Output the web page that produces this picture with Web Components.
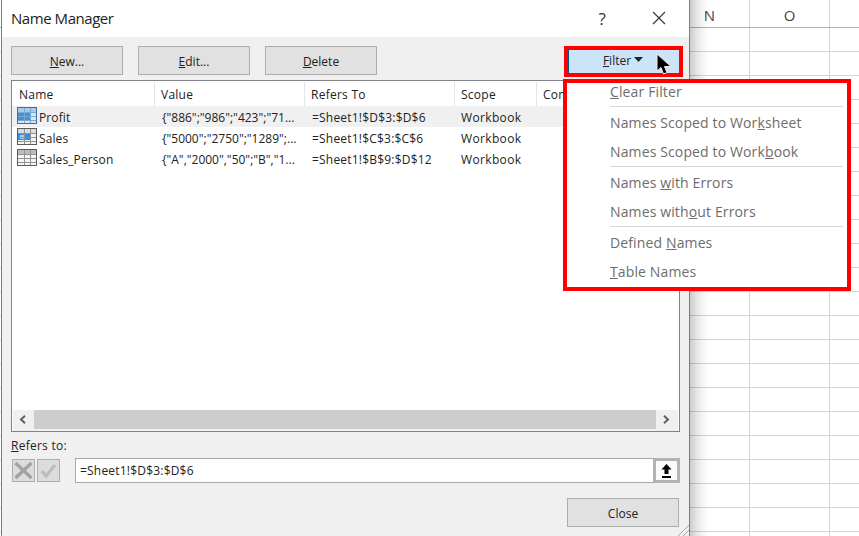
<!DOCTYPE html>
<html>
<head>
<meta charset="utf-8">
<style>
html,body{margin:0;padding:0;overflow:hidden}
body{font:12px "Open Sans","Noto Sans",sans-serif;color:#222;background:#fff}
</style>
</head>
<body>
<excel-screen></excel-screen>

<template id="t-btn">
  <style>
  :host{display:block;box-sizing:border-box;width:112px;height:29px;border:1px solid #adadad;background:#e1e1e1;color:#222;
    font:12px "Open Sans","Noto Sans",sans-serif;display:flex;align-items:center;justify-content:center;padding-top:2px}
  :host([hot]){background:#cce4f7;border:1px solid #005499;padding:0 2px 0 0}
  u{text-underline-offset:1px}
  </style>
  <slot></slot>
</template>

<script>
class NmButton extends HTMLElement {
  constructor(){super();
    this.attachShadow({mode:'open'})
    this.shadowRoot.appendChild(document.getElementById('t-btn').content.cloneNode(true))
  }
}
customElements.define('nm-button', NmButton)

class NameIcon extends HTMLElement {
  static get observedAttributes(){ return ['kind'] }
  attributeChangedCallback(){ this.render() }
  connectedCallback(){ this.render() }
  constructor(){super(); this.attachShadow({mode:'open'}) }
  render(){
    let kind = this.getAttribute('kind')
    let fill = ''
    let frame = '#5c5c5c'
    let line = '#929292'
    if(kind=='profit'){
      fill = '<rect x="1" y="1" width="18" height="4" fill="#a9c9e8"/><rect x="1" y="5" width="18" height="11" fill="#d5e6f5"/><rect x="1" y="6" width="13" height="7" fill="#3f92de"/>'
      frame = '#3e6e9f'
      line = '#7fa8cf'
    }
    if(kind=='sales'){
      fill = '<rect x="1" y="1" width="18" height="4" fill="#dcdcdc"/><rect x="1" y="5" width="18" height="11" fill="#f4f4f4"/><rect x="1" y="6" width="13" height="6" fill="#2f8de0"/><rect x="3" y="7" width="4" height="4" fill="#a9d0f2"/>'
    }
    if(kind=='plain'){
      fill = '<rect x="1" y="1" width="18" height="4" fill="#bdbdbd"/><rect x="1" y="5" width="18" height="11" fill="#f6f6f6"/>'
    }
    this.shadowRoot.innerHTML = `
    <style>:host{display:block;width:20px;height:17px;flex:none;margin-top:1px} svg{display:block}</style>
    <svg width="20" height="17" viewBox="0 0 20 17" shape-rendering="crispEdges">
      ${fill}
      <path d="M7.5 1v15M13.5 1v15M1 5.5h18M1 9.5h18M1 13h18" stroke="${line}" stroke-width="1" fill="none"/>
      <rect x=".5" y=".5" width="19" height="16" fill="none" stroke="${frame}"/>
    </svg>`
  }
}
customElements.define('name-icon', NameIcon)

class NameRow extends HTMLElement {
  static get observedAttributes(){ return ['name','value','refers','kind'] }
  attributeChangedCallback(){ this.render() }
  connectedCallback(){ this.render() }
  constructor(){super(); this.attachShadow({mode:'open'}) }
  render(){
    this.shadowRoot.innerHTML = `
    <style>
    :host{display:grid;grid-template-columns:144px 150px 149px 82px 1fr;height:21px;
      font:12px/23px "Open Sans","Noto Sans",sans-serif;color:#222}
    :host([selected]){background:#f0f0f0}
    div{white-space:nowrap;overflow:hidden}
    .n{display:flex;gap:2px;padding-left:5px;letter-spacing:.1px}
    .v{padding-left:6px}
    .r{padding-left:6px;letter-spacing:.2px}
    .s{padding-left:6px;letter-spacing:.35px}
    </style>
    <div class="n"><name-icon kind="${this.getAttribute('kind')}"></name-icon><span>${this.getAttribute('name')}</span></div>
    <div class="v">${this.getAttribute('value')}</div>
    <div class="r">${this.getAttribute('refers')}</div>
    <div class="s">Workbook</div>
    <div></div>`
  }
}
customElements.define('name-row', NameRow)

class NameList extends HTMLElement {
  constructor(){super();
    this.attachShadow({mode:'open'})
    this.shadowRoot.innerHTML = `
    <style>
    :host{display:flex;flex-direction:column;box-sizing:border-box;height:352px;margin:5px 9px 0 9px;border:1px solid #82828a;background:#fff;
      font:12px "Open Sans","Noto Sans",sans-serif;color:#222}
    .head{display:grid;grid-template-columns:143px 150px 150px 82px 1fr;height:25px;flex:none;letter-spacing:.25px;overflow:hidden;padding-top:1px;box-sizing:border-box}
    .head div{border-right:1px solid #e5e5e5;padding:4px 0 0 6px;white-space:nowrap;overflow:hidden}
    .head div:first-child{padding-left:7px}
    .head div:last-child{border:0}
    .rows{flex:1}
    .bar{flex:none;height:21px;display:flex;background:#f0f0f0;margin-left:1px;margin-right:1px}
    .bar svg{display:block;margin:5px 0 0 6px}
    .bar i{flex:1;background:#cdcdcd;height:19px}
    .bar .a{width:21px;height:19px;flex:none}
    .bar .b{width:22px;height:19px;flex:none}
    .bar .b svg{margin-left:7px}
    </style>
    <div class="head"><div>Name</div><div>Value</div><div>Refers To</div><div>Scope</div><div>Comment</div></div>
    <div class="rows"><slot></slot></div>
    <div class="bar">
      <div class="a"><svg width="7" height="9" viewBox="0 0 7 9"><path d="M6 .8 2 4.5 6 8.2" fill="none" stroke="#606060" stroke-width="2"/></svg></div>
      <i></i>
      <div class="b"><svg width="7" height="9" viewBox="0 0 7 9"><path d="M1 .8 5 4.5 1 8.2" fill="none" stroke="#606060" stroke-width="2"/></svg></div>
    </div>`
  }
}
customElements.define('name-list', NameList)

class RefersBox extends HTMLElement {
  constructor(){super();
    this.attachShadow({mode:'open'})
    this.shadowRoot.innerHTML = `
    <style>
    :host{display:block;margin:4px 9px 0 9px;font:12px "Open Sans","Noto Sans",sans-serif;color:#222;letter-spacing:.25px}
    .lab{height:20px;line-height:19px}
    .line{display:flex;align-items:center;margin-top:2px;height:25px}
    .tool{box-sizing:border-box;width:23px;height:23px;border:1px solid #adadad;background:#dcdcdc;margin-left:2px;display:block}
    .tool:first-child{margin-left:1px}
    .tool svg{display:block}
    .input{box-sizing:border-box;margin-left:15px;flex:1;height:25px;border:1px solid #a9a9a9;background:#fff;display:flex;align-items:center;padding-left:4px;letter-spacing:.2px}
    .input span{flex:1}
    .pick{box-sizing:border-box;width:27px;height:25px;margin-right:-1px;border:3px solid #b3b3b3;background:#fafafa;display:flex;align-items:center;justify-content:center}
    u{text-underline-offset:1px}
    </style>
    <div class="lab"><u>R</u>efers to:</div>
    <div class="line">
      <div class="tool"><svg width="21" height="21" viewBox="0 0 21 21"><path d="M2.5 3 18.500 18M18.500 3 2.500 18" stroke="#a2a2a2" stroke-width="3.4" fill="none"/></svg></div>
      <div class="tool"><svg width="21" height="21" viewBox="0 0 21 21"><path d="M4 11l4 5 9-11" stroke="#bcbcbc" stroke-width="3" fill="none"/></svg></div>
      <div class="input"><span>=Sheet1!$D$3:$D$6</span>
        <div class="pick"><svg width="11" height="14" viewBox="0 0 11 14"><path d="M5.5 0 10.5 5.5H7.5V10H3.500V5.500H.5Z" fill="#000"/><rect x="1" y="12" width="9" height="2" fill="#000"/></svg></div>
      </div>
    </div>`
  }
}
customElements.define('refers-box', RefersBox)

class NameDialog extends HTMLElement {
  constructor(){super();
    this.attachShadow({mode:'open'})
    this.shadowRoot.innerHTML = `
    <style>
    :host{display:flex;flex-direction:column;position:absolute;left:1px;top:0;width:689px;height:536px;box-sizing:border-box;
      background:#f0f0f0;border-left:1px solid #7d7d7d;border-right:1px solid #7d7d7d;
      font:12px "Open Sans","Noto Sans",sans-serif;color:#222}
    .shade{position:absolute;left:100%;top:0;bottom:0;width:19px;margin-left:1px;background:linear-gradient(90deg,rgba(0,0,0,.2),rgba(0,0,0,.09) 40%,rgba(0,0,0,.03) 75%,rgba(0,0,0,0))}
    .title{height:37px;flex:none;background:#fff;display:flex;align-items:center;padding:0 7px 1px 9px;font-size:15px;letter-spacing:-.45px;box-sizing:border-box}
    .title span{flex:1}
    .q{width:46px;text-align:center;font-size:17px;color:#333;margin-right:11px}
    .x{width:46px;height:36px;display:flex;align-items:center;justify-content:center}
    .tools{display:flex;gap:15px;margin:9px 9px 0 9px}
    .tools i{flex:1}
    .foot{display:flex;justify-content:flex-end;margin:15px 10px 0 0}
    .grip{position:absolute;right:0;bottom:0}
    u{text-underline-offset:1px}
    </style>
    <div class="shade"></div>
    <div class="title"><span>Name Manager</span><div class="q">?</div>
      <div class="x"><svg width="14" height="14" viewBox="0 0 14 14"><path d="M1 1 13 13M13 1 1 13" stroke="#333" stroke-width="1.1" fill="none"/></svg></div>
    </div>
    <div class="tools">
      <nm-button><u>N</u>ew...</nm-button>
      <nm-button><u>E</u>dit...</nm-button>
      <nm-button><u>D</u>elete</nm-button>
      <i></i>
      <nm-button hot><u>F</u>ilter <svg width="9" height="5" viewBox="0 0 9 5" style="margin-left:3px;margin-bottom:2px"><path d="M0 0H9L4.5 5Z" fill="#222"/></svg></nm-button>
    </div>
    <name-list>
      <name-row selected kind="profit" name="Profit" value='{"886";"986";"423";"71...' refers="=Sheet1!$D$3:$D$6"></name-row>
      <name-row kind="sales" name="Sales" value='{"5000";"2750";"1289";...' refers="=Sheet1!$C$3:$C$6"></name-row>
      <name-row kind="plain" name="Sales_Person" value='{"A","2000","50";"B","1...' refers="=Sheet1!$B$9:$D$12"></name-row>
    </name-list>
    <refers-box></refers-box>
    <div class="foot"><nm-button>Close</nm-button></div>
    <svg class="grip" width="11" height="11" viewBox="0 0 11 11"><path d="M0 11 11 0M5 11 11 5" stroke="#a8a8a8" fill="none"/></svg>`
  }
}
customElements.define('name-dialog', NameDialog)

class FilterMenu extends HTMLElement {
  constructor(){super();
    this.attachShadow({mode:'open'})
    this.shadowRoot.innerHTML = `
    <style>
    :host{position:absolute;left:563px;top:79px;width:288px;height:212px;box-sizing:border-box;border:4px solid #f00;background:#fff;display:block;
      font:14px "Open Sans","Noto Sans",sans-serif;color:#6d6d6d;letter-spacing:.13px;padding:0 4px 0 43px}
    div{height:29px;line-height:29px;white-space:nowrap}
    .a{padding-top:1px}
    .first{height:23px;line-height:17px}
    hr{border:0;border-top:1px solid #d7d7d7;margin:0;height:0}
    u{text-underline-offset:1px}
    </style>
    <div class="first"><u>C</u>lear Filter</div>
    <hr>
    <div class="a">Names Scoped to Wor<u>k</u>sheet</div>
    <div>Names Scoped to Work<u>b</u>ook</div>
    <hr>
    <div class="a">Names <u>w</u>ith Errors</div>
    <div>Names with<u>o</u>ut Errors</div>
    <hr>
    <div class="a">Defined <u>N</u>ames</div>
    <div><u>T</u>able Names</div>`
  }
}
customElements.define('filter-menu', FilterMenu)

class SheetBack extends HTMLElement {
  constructor(){super();
    this.attachShadow({mode:'open'})
    this.shadowRoot.innerHTML = `
    <style>
    :host{display:block;position:absolute;inset:0;background:#fff;
      background-image:linear-gradient(#d4d4d4 1px,transparent 1px),linear-gradient(90deg,#d4d4d4 1px,transparent 1px);
      background-size:100% 24px,80px 100%;background-position:0 3px,29px 0;font:15px "Open Sans","Noto Sans",sans-serif;color:#444}
    .h{display:flex;height:28px;padding-left:670px;background:#fff;border-bottom:1px solid #b0b0b0;box-sizing:border-box}
    .h div{flex:none;width:80px;text-align:center;line-height:30px;border-right:1px solid #d4d4d4;box-sizing:border-box}
    </style>
    <div class="h"><div>N</div><div>O</div><div></div></div>`
  }
}
customElements.define('sheet-back', SheetBack)

class ExcelScreen extends HTMLElement {
  constructor(){super();
    this.attachShadow({mode:'open'})
    this.shadowRoot.innerHTML = `
    <style>
    :host{display:block;position:relative;width:859px;height:536px;overflow:hidden}
    .mark{position:absolute;left:564px;top:46px;width:119px;height:31px;box-sizing:border-box;border:4px solid #f00}
    .cursor{position:absolute;left:656px;top:53px}
    </style>
    <sheet-back></sheet-back>
    <name-dialog></name-dialog>
    <filter-menu></filter-menu>
    <div class="mark"></div>
    <svg class="cursor" width="17" height="23" viewBox="0 0 17 23"><path d="M1 1V18L5 14.5 7.5 21 11 19.5 8.5 13.5H15Z" fill="#000" stroke="#eee" stroke-width="1"/></svg>`
  }
}
customElements.define('excel-screen', ExcelScreen)
</script>
</body>
</html>
